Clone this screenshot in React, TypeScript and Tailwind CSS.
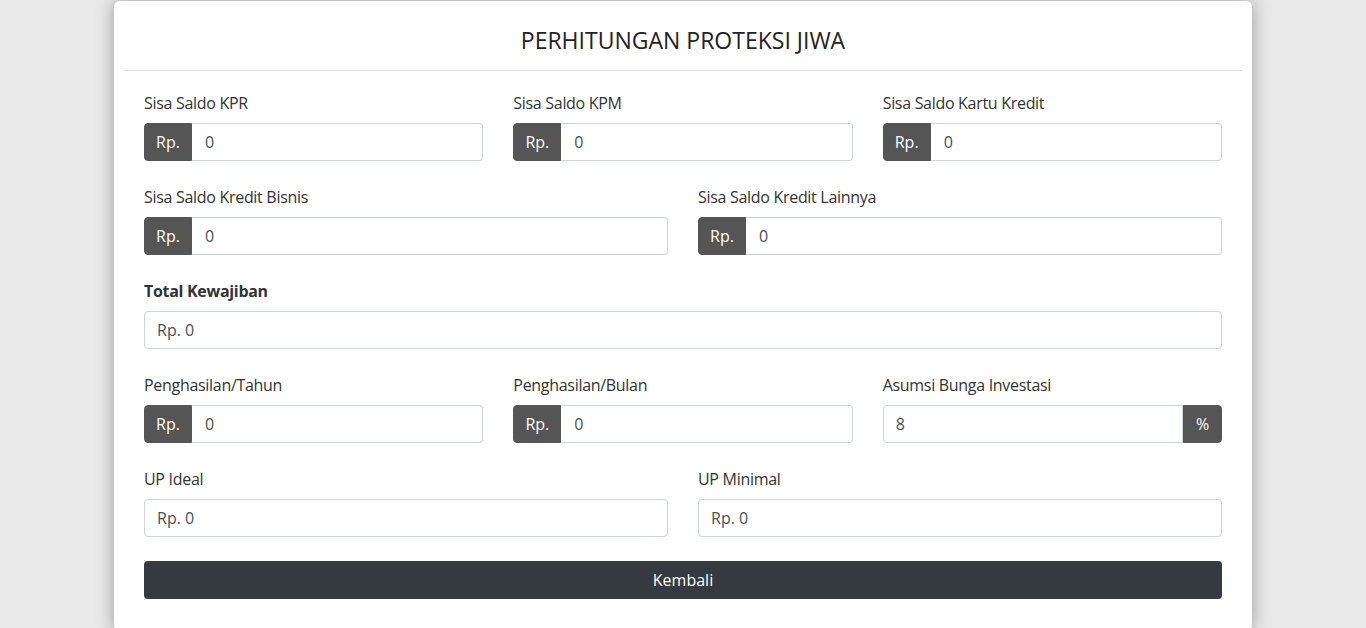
import React from 'react';

function AddonInput({ label, value, bold, prefix, suffix }: { label: string; value: string; bold?: boolean; prefix?: string; suffix?: string }) {
  return (
    <div className="flex flex-col">
      <label className={`text-[16px] leading-6 mb-2 text-[#333] tracking-[-0.3px] ${bold ? 'font-bold' : ''}`}>{label}</label>
      <div className="flex h-[38px]">
        {prefix && (
          <span className="flex items-center justify-center w-12 bg-[#555555] text-white rounded-l border border-[#555555] text-[16px]">
            {prefix}
          </span>
        )}
        <div
          className={`flex-1 flex items-center px-3 border border-[#ced4da] bg-white text-[16px] text-[#495057] ${
            prefix ? 'rounded-r border-l-0 pl-[13px]' : suffix ? 'rounded-l' : 'rounded'
          }`}
        >
          {value}
        </div>
        {suffix && (
          <span className="flex items-center justify-center w-[39px] bg-[#555555] text-white rounded-r border border-[#555555] text-[16px]">
            {suffix}
          </span>
        )}
      </div>
    </div>
  );
}

export default function App() {
  return (
    <div className="min-h-screen bg-[#e9e9e9] pt-px" style={{ fontFamily: '"Open Sans", "Noto Sans", sans-serif' }}>
      <div className="mx-auto w-[1138px] bg-white rounded-md shadow-[0_0_18px_rgba(0,0,0,0.35)] pb-8">
        <div className="mx-[10px] border-b border-[#dcdcdc] pt-[23px] pb-[13px] text-center">
          <h1 className="text-[23px] leading-[33px] text-[#222]">PERHITUNGAN PROTEKSI JIWA</h1>
        </div>
        <div className="px-[30px] pt-5 flex flex-col gap-6">
          <div className="grid grid-cols-3 gap-[30px]">
            <AddonInput label="Sisa Saldo KPR" value="0" prefix="Rp." />
            <AddonInput label="Sisa Saldo KPM" value="0" prefix="Rp." />
            <AddonInput label="Sisa Saldo Kartu Kredit" value="0" prefix="Rp." />
          </div>
          <div className="grid grid-cols-2 gap-[30px]">
            <AddonInput label="Sisa Saldo Kredit Bisnis" value="0" prefix="Rp." />
            <AddonInput label="Sisa Saldo Kredit Lainnya" value="0" prefix="Rp." />
          </div>
          <AddonInput label="Total Kewajiban" value="Rp. 0" bold />
          <div className="grid grid-cols-3 gap-[30px]">
            <AddonInput label="Penghasilan/Tahun" value="0" prefix="Rp." />
            <AddonInput label="Penghasilan/Bulan" value="0" prefix="Rp." />
            <AddonInput label="Asumsi Bunga Investasi" value="8" suffix="%" />
          </div>
          <div className="grid grid-cols-2 gap-[30px]">
            <AddonInput label="UP Ideal" value="Rp. 0" />
            <AddonInput label="UP Minimal" value="Rp. 0" />
          </div>
          <button className="h-[38px] w-full rounded bg-[#343a40] text-white text-[16px]">Kembali</button>
        </div>
      </div>
    </div>
  );
}
